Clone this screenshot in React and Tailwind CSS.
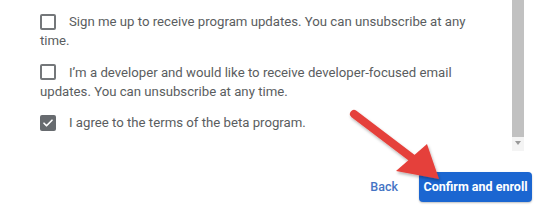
export default function App() {
  const items = [
    { text: "Sign me up to receive program updates. You can unsubscribe at any time.", checked: false },
    { text: "I’m a developer and would like to receive developer-focused email updates. You can unsubscribe at any time.", checked: false },
    { text: "I agree to the terms of the beta program.", checked: true },
  ];

  return (
    <div className="relative w-[549px] h-[206px] overflow-hidden bg-white font-['Roboto',sans-serif]">
      <div className="flex h-[151px]">
        <div className="w-[492px] pl-10 pt-[12px] text-[13.2px] leading-[19px] text-[#5a5d60]">
          {items.map((it, i) => (
            <p key={i} className="mb-[12.5px]">
              {it.checked ? (
                <span className="mr-[13px] inline-flex h-[16px] w-[16px] -translate-y-[1px] items-center justify-center rounded-[2px] bg-[#676b6f] align-middle">
                  <svg width="12" height="12" viewBox="0 0 24 24" fill="none" stroke="white" strokeWidth="3.4" strokeLinecap="round" strokeLinejoin="round">
                    <path d="M4 12.5l5 5L20 6.5" />
                  </svg>
                </span>
              ) : (
                <span className="mr-[13px] inline-block h-[16px] w-[16px] -translate-y-[1px] rounded-[2px] border-2 border-[#74777a] align-middle" />
              )}
              {it.text}
            </p>
          ))}
        </div>
        <div className="ml-auto mr-[25px] flex w-[12px] flex-col bg-[#f4f4f4]">
          <div className="h-[137px] bg-[#c1c1c1]" />
          <div className="flex h-[12px] items-center justify-center">
            <svg width="6" height="4" viewBox="0 0 6 4">
              <path d="M0 0h6L3 4z" fill="#9a9a9a" />
            </svg>
          </div>
        </div>
      </div>

      <div className="mt-[21px] flex items-center justify-end gap-[21px] pr-[17px]">
        <span className="text-[12.5px] font-medium text-[#4574c4]">Back</span>
        <button className="h-[30px] w-[113px] rounded-[4px] bg-[#1b66d1] text-[12.5px] font-bold text-white shadow-[0_1px_2px_rgba(0,0,0,0.25)]">
          Confirm and enroll
        </button>
      </div>

      {/* red annotation arrow */}
      <svg className="pointer-events-none absolute left-0 top-0" width="549" height="206" viewBox="0 0 549 206">
        <defs>
          <filter id="sh" x="-20%" y="-20%" width="140%" height="140%">
            <feDropShadow dx="1" dy="2" stdDeviation="1.5" floodColor="#000" floodOpacity="0.3" />
          </filter>
        </defs>
        <g filter="url(#sh)" fill="#e5413b">
          <line x1="354" y1="114" x2="412" y2="158" stroke="#e5413b" strokeWidth="8" strokeLinecap="round" />
          <path d="M439 179 L396 171 L427 144 Z" />
        </g>
      </svg>
    </div>
  );
}
